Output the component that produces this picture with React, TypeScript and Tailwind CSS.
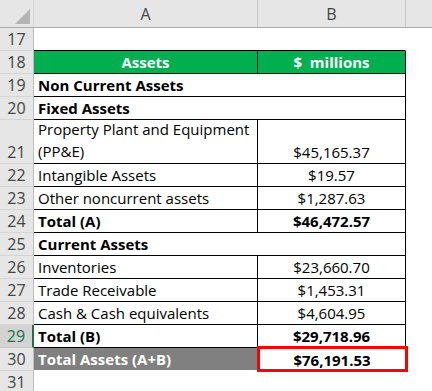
import React from "react";

type Row = {
  n: number;
  a?: string;
  b?: string;
  kind?: "empty" | "head" | "section" | "item" | "total" | "grand" | "wrap";
};

const rows: Row[] = [
  { n: 17, kind: "empty" },
  { n: 18, a: "Assets", b: "$  millions", kind: "head" },
  { n: 19, a: "Non Current Assets", kind: "section" },
  { n: 20, a: "Fixed Assets", kind: "section" },
  { n: 21, a: "Property Plant and Equipment\n(PP&E)", b: "$45,165.37", kind: "wrap" },
  { n: 22, a: "Intangible Assets", b: "$19.57", kind: "item" },
  { n: 23, a: "Other noncurrent assets", b: "$1,287.63", kind: "item" },
  { n: 24, a: "Total (A)", b: "$46,472.57", kind: "total" },
  { n: 25, a: "Current Assets", kind: "section" },
  { n: 26, a: "Inventories", b: "$23,660.70", kind: "item" },
  { n: 27, a: "Trade Receivable", b: "$1,453.31", kind: "item" },
  { n: 28, a: "Cash & Cash equivalents", b: "$4,604.95", kind: "item" },
  { n: 29, a: "Total (B)", b: "$29,718.96", kind: "total" },
  { n: 30, a: "Total Assets (A+B)", b: "$76,191.53", kind: "grand" },
  { n: 31, kind: "empty" },
];

function SheetRow({ row }: { row: Row }) {
  const active = row.n === 29;
  const tall = row.kind === "wrap";
  const h = tall ? "h-[44px]" : "h-[23px]";
  const bold = row.kind === "section" || row.kind === "total" || row.kind === "grand" || row.kind === "head";
  const tableRow = row.n >= 17 && row.n <= 29;

  return (
    <div className={`flex ${h} leading-[20px]`}>
      <div
        className={`w-[34px] shrink-0 flex items-end justify-center pb-[1px] border-b border-r text-[16px] ${
          active
            ? "bg-[#d2d2d2] text-[#217346] border-b-[#c6c6c6] border-r-[#217346] border-r-2"
            : "bg-[#e6e6e6] text-[#444] border-b-[#d4d4d4] border-r-[#bdbdbd]"
        }`}
      >
        {row.n}
      </div>

      {row.kind === "empty" && (
        <>
          <div className={`w-[224px] shrink-0 ${tableRow ? "border-b border-black" : ""}`} />
          <div className={`w-[148px] shrink-0 ${tableRow ? "border-b border-r border-r-transparent border-black" : ""}`} />
        </>
      )}

      {row.kind === "head" && (
        <>
          <div className="w-[224px] shrink-0 bg-[#00b050] border-b border-r border-black text-white font-bold flex items-end justify-center pb-[1px]">
            {row.a}
          </div>
          <div className="w-[148px] shrink-0 bg-[#00b050] border-b border-r border-black text-white font-bold flex items-end justify-center pb-[1px] whitespace-pre">
            {row.b}
          </div>
        </>
      )}

      {row.kind === "section" && (
        <div className="w-[372px] shrink-0 border-b border-r border-black font-bold flex items-end pl-[4px] pb-[1px]">
          {row.a}
        </div>
      )}

      {(row.kind === "item" || row.kind === "total" || row.kind === "wrap") && (
        <>
          <div
            className={`w-[224px] shrink-0 border-b border-r border-black flex items-end pl-[4px] pb-[1px] whitespace-pre-line ${
              bold ? "font-bold" : ""
            } ${tall ? "leading-[22px]" : ""}`}
          >
            {row.a}
          </div>
          <div
            className={`w-[148px] shrink-0 border-b border-r border-black flex items-end justify-center pb-[1px] ${
              bold ? "font-bold" : ""
            }`}
          >
            {row.b}
          </div>
        </>
      )}

      {row.kind === "grand" && (
        <>
          <div className="w-[224px] shrink-0 bg-[#808080] border-b border-white text-white font-bold flex items-end pl-[4px] pb-[1px]">
            {row.a}
          </div>
          <div className="relative w-[148px] shrink-0 flex items-end justify-center pb-[1px] font-bold">
            {row.b}
            <div className="absolute left-[-1px] right-[-2px] top-[-2px] bottom-[-1px] border-[3px] border-[#ff0000]" />
          </div>
        </>
      )}
    </div>
  );
}

export default function App() {
  return (
    <div className="w-[432px] h-[391px] overflow-hidden bg-white text-black text-[15px] font-['Open_Sans','Liberation_Sans',sans-serif]">
      <div className="flex h-[28px] bg-[#e6e6e6] border-b border-[#ababab] text-[#444] text-[16px]">
        <div className="relative w-[34px] shrink-0 border-r border-[#d4d4d4]">
          <div className="absolute right-[3px] bottom-[3px] w-0 h-0 border-l-[15px] border-l-transparent border-b-[15px] border-b-[#b4b4b4]" />
        </div>
        <div className="w-[224px] shrink-0 flex items-center justify-center border-r border-[#c8c8c8]">
          A
        </div>
        <div className="w-[148px] shrink-0 flex items-center justify-center border-r border-[#c8c8c8]">
          B
        </div>
        <div className="flex-1" />
      </div>
      {rows.map((r) => (
        <SheetRow key={r.n} row={r} />
      ))}
    </div>
  );
}
